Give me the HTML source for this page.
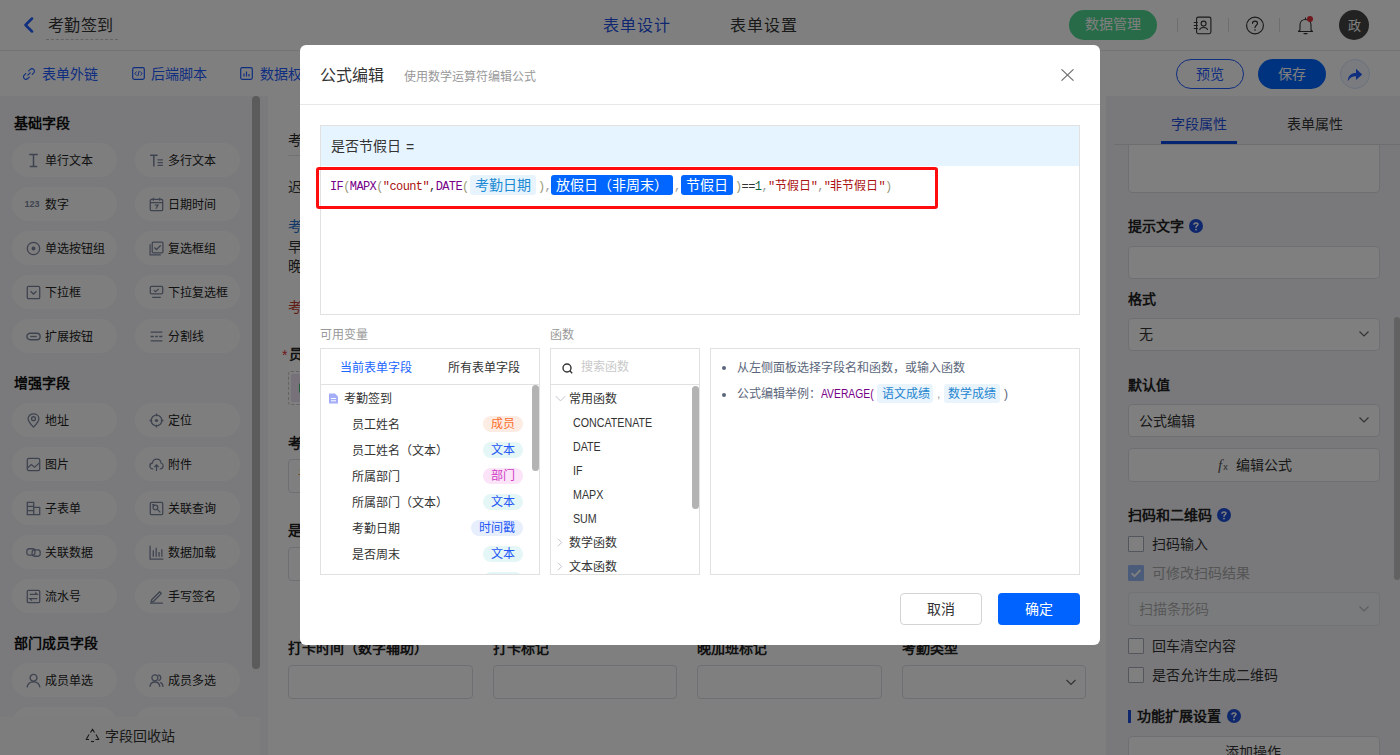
<!DOCTYPE html>
<html lang="zh-CN">
<head>
<meta charset="utf-8">
<style>
*{box-sizing:border-box;margin:0;padding:0}
html,body{width:1400px;height:755px;overflow:hidden;background:#fff}
body{font-family:"Liberation Sans",sans-serif;color:#333;position:relative}
.abs{position:absolute}
.t{position:absolute;white-space:nowrap;line-height:1}
/* header */
#hdr{left:0;top:0;width:1400px;height:51px;background:#fff;border-bottom:1px solid #e8e8e8}
#tb{left:0;top:51px;width:1400px;height:45px;background:#fff}
#side{left:0;top:96px;width:260px;height:659px;background:#f4f5f9}
.pill{position:absolute;width:105px;height:34px;border-radius:17px;background:#fdfdfd}
.pill .ic{position:absolute;left:14px;top:10px;width:15px;height:15px;overflow:visible}
.pill .tx{position:absolute;left:33px;top:1px;line-height:34px;font-size:12px;color:#222;white-space:nowrap}
.sh{position:absolute;left:14px;font-size:14px;font-weight:bold;color:#111;line-height:1}
#canvas{left:260px;top:96px;width:846px;height:659px;background:#f4f5f9}
#form{left:268px;top:96px;width:838px;height:659px;background:#fff}
#rp{left:1106px;top:96px;width:294px;height:659px;background:#f2f3f7}
.inp{position:absolute;background:#fff;border:1px solid #dcdfe6;border-radius:4px}
.lbl{position:absolute;font-size:14px;font-weight:bold;color:#222;line-height:1;white-space:nowrap}
.cb{position:absolute;width:16px;height:16px;border:1px solid #a9adbb;border-radius:1px;background:#fff}
.cbl{position:absolute;font-size:14px;color:#333;line-height:1;white-space:nowrap}
#mask{left:0;top:0;width:1400px;height:755px;background:rgba(0,0,0,.5)}
/* modal */
#modal{left:300px;top:45px;width:800px;height:600px;background:#fff;border-radius:6px}
.tag{position:absolute;height:16px;border-radius:8px;font-size:12px;line-height:16px;text-align:center;white-space:nowrap}
.fn{font-size:12px;color:#333;transform:scaleX(0.89);transform-origin:0 0}
.mono{font-family:"Liberation Mono",monospace}
</style>
</head>
<body>
<!-- header -->
<div id="hdr" class="abs">
  <svg class="abs" style="left:22px;top:17px" width="14" height="16" viewBox="0 0 14 16"><path d="M10 1.5 L3.5 8 L10 14.5" fill="none" stroke="#1e5cff" stroke-width="2.5" stroke-linecap="round" stroke-linejoin="round"/></svg>
  <div class="t" style="left:48px;top:18px;font-size:16px;color:#333;letter-spacing:0.3px">考勤签到</div>
  <div class="abs" style="left:46px;top:39px;width:72px;border-top:1px dashed #c9c9c9"></div>
  <div class="t" style="left:603px;top:18px;font-size:16px;letter-spacing:1px;color:#1d4fe0">表单设计</div>
  <div class="t" style="left:730px;top:18px;font-size:16px;letter-spacing:1px;color:#333">表单设置</div>
  <div class="abs" style="left:1069px;top:10px;width:88px;height:30px;border-radius:15px;background:#4fd690"></div>
  <div class="t" style="left:1085px;top:17px;font-size:14px;color:#fff">数据管理</div>
  <div class="abs" style="left:1177px;top:18px;width:1px;height:14px;background:#ddd"></div>
  <svg class="abs" style="left:1193px;top:16px" width="20" height="19" viewBox="0 0 20 19"><rect x="3.6" y="1.1" width="14.3" height="16.6" rx="1.6" fill="none" stroke="#333" stroke-width="1.1"/><circle cx="10.6" cy="7.6" r="2.5" fill="none" stroke="#333" stroke-width="1.1"/><path d="M6.6 14 C7.2 10.6 14 10.6 14.6 14" fill="none" stroke="#333" stroke-width="1.1"/><path d="M0.8 6.5h4M0.8 9.5h4M0.8 12.5h4" stroke="#333" stroke-width="1"/></svg>
  <div class="abs" style="left:1228px;top:18px;width:1px;height:14px;background:#ddd"></div>
  <svg class="abs" style="left:1245px;top:16px" width="20" height="20" viewBox="0 0 20 20"><circle cx="10" cy="9.5" r="8.4" fill="none" stroke="#333" stroke-width="1.15"/><path d="M7.5 7.3 C7.5 4.4 12.5 4.4 12.5 7.3 C12.5 9.2 10 9.2 10 11.6" fill="none" stroke="#333" stroke-width="1.2" stroke-linecap="round"/><circle cx="10" cy="14" r="0.8" fill="#333"/></svg>
  <div class="abs" style="left:1279px;top:18px;width:1px;height:14px;background:#ddd"></div>
  <svg class="abs" style="left:1296px;top:15px" width="20" height="20" viewBox="0 0 20 20"><path d="M2.5 16.5 L4 15 L4 10 C4 6.7 6.4 4.5 9.5 4.5 C12.6 4.5 15 6.7 15 10 L15 15 L16.5 16.5 Z" fill="none" stroke="#333" stroke-width="1.1" stroke-linejoin="round"/><path d="M8 18.6h3" stroke="#333" stroke-width="1.2" stroke-linecap="round"/><path d="M9.5 2.5v2" stroke="#333" stroke-width="1.1"/><circle cx="14" cy="4" r="3" fill="#e0303a"/></svg>
  <div class="abs" style="left:1339px;top:10px;width:30px;height:30px;border-radius:50%;background:#454545"></div>
  <div class="t" style="left:1348px;top:19px;font-size:13px;color:#fff">政</div>
</div>
<!-- toolbar -->
<div id="tb" class="abs">
  <svg class="abs" style="left:23px;top:17px" width="12" height="12" viewBox="0 0 13 13"><path d="M5.2 7.8 L7.8 5.2" stroke="#1e5cff" stroke-width="1.2" stroke-linecap="round"/><path d="M6.2 3.2 L7.6 1.8 C8.8 0.6 10.6 0.6 11.6 1.6 C12.6 2.6 12.6 4.4 11.4 5.6 L10 7" fill="none" stroke="#1e5cff" stroke-width="1.2" stroke-linecap="round"/><path d="M3 6 L1.6 7.4 C0.4 8.6 0.4 10.4 1.4 11.4 C2.4 12.4 4.2 12.4 5.4 11.2 L6.8 9.8" fill="none" stroke="#1e5cff" stroke-width="1.2" stroke-linecap="round"/></svg>
  <div class="t" style="left:42px;top:16px;font-size:14px;color:#1e5cff">表单外链</div>
  <svg class="abs" style="left:132px;top:16px" width="13" height="13" viewBox="0 0 13 13"><rect x="0.7" y="0.7" width="11.6" height="11.6" rx="1.5" fill="none" stroke="#1e5cff" stroke-width="1.2"/><path d="M4.5 4.5 L3 6.5 L4.5 8.5 M8.5 4.5 L10 6.5 L8.5 8.5 M7.2 3.8 L5.8 9.2" fill="none" stroke="#1e5cff" stroke-width="1"/></svg>
  <div class="t" style="left:151px;top:16px;font-size:14px;color:#1e5cff">后端脚本</div>
  <svg class="abs" style="left:240px;top:16px" width="13" height="13" viewBox="0 0 13 13"><rect x="0.7" y="0.7" width="11.6" height="11.6" rx="1.5" fill="none" stroke="#1e5cff" stroke-width="1.2"/><path d="M4 9.5V6.5M6.5 9.5V4.5M9 9.5V7" stroke="#1e5cff" stroke-width="1.2"/></svg>
  <div class="t" style="left:260px;top:16px;font-size:14px;color:#1e5cff">数据权限</div>
  <div class="abs" style="left:1176px;top:8px;width:68px;height:30px;border-radius:15px;border:1px solid #1e5cff;background:#fff"></div>
  <div class="t" style="left:1196px;top:16px;font-size:14px;color:#1e5cff">预览</div>
  <div class="abs" style="left:1258px;top:8px;width:68px;height:30px;border-radius:15px;background:#0066ff"></div>
  <div class="t" style="left:1278px;top:16px;font-size:14px;color:#fff">保存</div>
  <div class="abs" style="left:1340px;top:8px;width:30px;height:30px;border-radius:50%;border:1px solid #d6e2fb;background:#f2f6fe"></div>
  <svg class="abs" style="left:1347px;top:17px" width="16" height="14" viewBox="0 0 16 14"><path d="M0.8 13.2 C1 7.5 4.5 5 9 5 L9 0.8 L15.2 6.5 L9 12 L9 8.2 C5.5 8.2 2.8 9.5 0.8 13.2 Z" fill="#1e5cff"/></svg>
</div>
<!-- sidebar -->
<div id="side" class="abs">
  <div class="sh" style="top:20px">基础字段</div>
  <div class="sh" style="top:280px">增强字段</div>
  <div class="sh" style="top:540px">部门成员字段</div>
</div>
<div class="abs" style="left:252px;top:96px;width:8px;height:573px;border-radius:4px;background:#b6b6b8"></div>
<div class="pill" style="left:12px;top:143px"><svg class="ic" viewBox="0 0 14 14"><path d="M3 1.5h8M7 1.5v11M3.5 12.5h7" stroke="#7d87a0" stroke-width="1.4" fill="none"/></svg><div class="tx">单行文本</div></div>
<div class="pill" style="left:135px;top:143px"><svg class="ic" viewBox="0 0 14 14"><path d="M1 2h7M4.5 2v10.5" stroke="#7d87a0" stroke-width="1.4" fill="none"/><path d="M8 6.5h5M8 9h5M8 11.5h5" stroke="#7d87a0" stroke-width="1.2"/></svg><div class="tx">多行文本</div></div>
<div class="pill" style="left:12px;top:187px"><svg class="ic" viewBox="0 0 14 14"><text x="-1.5" y="9.4" font-size="9" font-weight="bold" font-family="Liberation Sans" fill="#7d87a0" textLength="14" lengthAdjust="spacingAndGlyphs">123</text></svg><div class="tx">数字</div></div>
<div class="pill" style="left:135px;top:187px"><svg class="ic" viewBox="0 0 14 14"><rect x="1.2" y="2.2" width="11.6" height="10.6" rx="1.2" fill="none" stroke="#7d87a0" stroke-width="1.2"/><path d="M1.2 5.2h11.6M4 0.8v2.6M10 0.8v2.6M5.5 7.5h3L6.5 11" stroke="#7d87a0" stroke-width="1.1" fill="none"/></svg><div class="tx">日期时间</div></div>
<div class="pill" style="left:12px;top:231px"><svg class="ic" viewBox="0 0 14 14"><circle cx="7" cy="7" r="5.8" fill="none" stroke="#7d87a0" stroke-width="1.2"/><circle cx="7" cy="7" r="1.8" fill="#7d87a0"/></svg><div class="tx">单选按钮组</div></div>
<div class="pill" style="left:135px;top:231px"><svg class="ic" viewBox="0 0 14 14"><path d="M1 3V13h10" fill="none" stroke="#7d87a0" stroke-width="1.1"/><rect x="3" y="1" width="10" height="10" rx="1" fill="none" stroke="#7d87a0" stroke-width="1.2"/><path d="M5 6l2 2 4-4" fill="none" stroke="#7d87a0" stroke-width="1.2"/></svg><div class="tx">复选框组</div></div>
<div class="pill" style="left:12px;top:275px"><svg class="ic" viewBox="0 0 14 14"><rect x="1.2" y="1.2" width="11.6" height="11.6" rx="1.2" fill="none" stroke="#7d87a0" stroke-width="1.2"/><path d="M4.2 5.8L7 8.4 9.8 5.8" fill="none" stroke="#7d87a0" stroke-width="1.2"/></svg><div class="tx">下拉框</div></div>
<div class="pill" style="left:135px;top:275px"><svg class="ic" viewBox="0 0 14 14"><rect x="1.2" y="1.2" width="11.6" height="7" rx="1.2" fill="none" stroke="#7d87a0" stroke-width="1.2"/><path d="M3 11.5h8M4.5 4.8l1.5 1.4 3-2.4" fill="none" stroke="#7d87a0" stroke-width="1.2"/></svg><div class="tx">下拉复选框</div></div>
<div class="pill" style="left:12px;top:319px"><svg class="ic" viewBox="0 0 14 14"><rect x="0.8" y="4" width="12.4" height="6" rx="3" fill="none" stroke="#7d87a0" stroke-width="1.3"/><path d="M4 7h6" stroke="#7d87a0" stroke-width="1.2"/></svg><div class="tx">扩展按钮</div></div>
<div class="pill" style="left:135px;top:319px"><svg class="ic" viewBox="0 0 14 14"><path d="M1.5 3h11M1.5 11h11M1.5 7h3M5.8 7h2.4M9.5 7h3" stroke="#7d87a0" stroke-width="1.2"/></svg><div class="tx">分割线</div></div>
<div class="pill" style="left:12px;top:403px"><svg class="ic" viewBox="0 0 14 14"><path d="M7 13.2C3.5 9.5 2 7.5 2 5.3 2 2.6 4.2 0.8 7 0.8s5 1.8 5 4.5c0 2.2-1.5 4.2-5 7.9z" fill="none" stroke="#7d87a0" stroke-width="1.2"/><circle cx="7" cy="5.3" r="1.8" fill="none" stroke="#7d87a0" stroke-width="1.2"/></svg><div class="tx">地址</div></div>
<div class="pill" style="left:135px;top:403px"><svg class="ic" viewBox="0 0 14 14"><circle cx="7" cy="7" r="5" fill="none" stroke="#7d87a0" stroke-width="1.2"/><circle cx="7" cy="7" r="1.5" fill="#7d87a0"/><path d="M7 0.5v2.5M7 11v2.5M0.5 7H3M11 7h2.5" stroke="#7d87a0" stroke-width="1.2"/></svg><div class="tx">定位</div></div>
<div class="pill" style="left:12px;top:447px"><svg class="ic" viewBox="0 0 14 14"><rect x="1.2" y="1.2" width="11.6" height="11.6" rx="1.5" fill="none" stroke="#7d87a0" stroke-width="1.2"/><path d="M1.5 10l3.5-3 3 2.5 4.5-4" fill="none" stroke="#7d87a0" stroke-width="1.1"/></svg><div class="tx">图片</div></div>
<div class="pill" style="left:135px;top:447px"><svg class="ic" viewBox="0 0 14 14"><path d="M4 11H3.5C2 11 0.8 9.8 0.8 8.3 0.8 6.9 1.9 5.8 3.2 5.6 3.6 3.5 5.2 2 7.2 2c2.1 0 3.8 1.6 4 3.6 1.2 0.3 2 1.3 2 2.6C13.2 9.8 12 11 10.5 11H10" fill="none" stroke="#7d87a0" stroke-width="1.2"/><path d="M7 13V7.5M5 9.3L7 7.3 9 9.3" fill="none" stroke="#7d87a0" stroke-width="1.2"/></svg><div class="tx">附件</div></div>
<div class="pill" style="left:12px;top:491px"><svg class="ic" viewBox="0 0 14 14"><path d="M1.2 1.2h6v11.6h-6zM7.2 6h5.6v6.8H7.2M1.2 5h6M1.2 9h6" fill="none" stroke="#7d87a0" stroke-width="1.2"/></svg><div class="tx">子表单</div></div>
<div class="pill" style="left:135px;top:491px"><svg class="ic" viewBox="0 0 14 14"><rect x="1.2" y="1.2" width="11.6" height="11.6" rx="1.2" fill="none" stroke="#7d87a0" stroke-width="1.2"/><circle cx="6" cy="6" r="2.2" fill="none" stroke="#7d87a0" stroke-width="1.2"/><path d="M7.6 7.6l3 3M3 3.5h2" stroke="#7d87a0" stroke-width="1.2"/></svg><div class="tx">关联查询</div></div>
<div class="pill" style="left:12px;top:535px"><svg class="ic" viewBox="0 0 14 14"><rect x="0.8" y="3.5" width="7.5" height="6" rx="2" fill="none" stroke="#7d87a0" stroke-width="1.2"/><rect x="5.7" y="4.5" width="7.5" height="6" rx="2" fill="none" stroke="#7d87a0" stroke-width="1.2"/></svg><div class="tx">关联数据</div></div>
<div class="pill" style="left:135px;top:535px"><svg class="ic" viewBox="0 0 14 14"><path d="M1 0.8v12.4h12.4" fill="none" stroke="#7d87a0" stroke-width="1.2"/><path d="M4 11V5M6.7 11V2.5M9.4 11V6.5M12 11V4" stroke="#7d87a0" stroke-width="1.2"/></svg><div class="tx">数据加载</div></div>
<div class="pill" style="left:12px;top:579px"><svg class="ic" viewBox="0 0 14 14"><rect x="1.2" y="1.2" width="11.6" height="11.6" rx="1.2" fill="none" stroke="#7d87a0" stroke-width="1.2"/><path d="M3.5 5h7l-2-1.8M10.5 9h-7l2 1.8" fill="none" stroke="#7d87a0" stroke-width="1.1"/></svg><div class="tx">流水号</div></div>
<div class="pill" style="left:135px;top:579px"><svg class="ic" viewBox="0 0 14 14"><path d="M2.5 10L10 2.5l1.6 1.6-7.5 7.5-2.2 0.6z" fill="none" stroke="#7d87a0" stroke-width="1.2" stroke-linejoin="round"/><path d="M1 13.2h12" stroke="#7d87a0" stroke-width="1.2"/></svg><div class="tx">手写签名</div></div>
<div class="pill" style="left:12px;top:663px"><svg class="ic" viewBox="0 0 14 14"><circle cx="7" cy="4.5" r="3.2" fill="none" stroke="#7d87a0" stroke-width="1.3"/><path d="M1 13.5c0.5-3.5 3-5.2 6-5.2s5.5 1.7 6 5.2" fill="none" stroke="#7d87a0" stroke-width="1.3"/></svg><div class="tx">成员单选</div></div>
<div class="pill" style="left:135px;top:663px"><svg class="ic" viewBox="0 0 14 14"><circle cx="5.5" cy="4.5" r="2.8" fill="none" stroke="#7d87a0" stroke-width="1.2"/><path d="M0.8 13c0.4-3 2.3-4.6 4.7-4.6s4.3 1.6 4.7 4.6M8.5 1.8c1.5 0.2 2.5 1.3 2.5 2.7s-1 2.4-2.2 2.7M10.5 8.7c1.5 0.6 2.4 2 2.7 4.3" fill="none" stroke="#7d87a0" stroke-width="1.2"/></svg><div class="tx">成员多选</div></div>
<div class="pill" style="left:12px;top:707px"><svg class="ic" viewBox="0 0 14 14"><circle cx="7" cy="4.5" r="3.2" fill="none" stroke="#7d87a0" stroke-width="1.3"/><path d="M1 13.5c0.5-3.5 3-5.2 6-5.2s5.5 1.7 6 5.2" fill="none" stroke="#7d87a0" stroke-width="1.3"/></svg><div class="tx">部门单选</div></div>
<div class="pill" style="left:135px;top:707px"><svg class="ic" viewBox="0 0 14 14"><circle cx="5.5" cy="4.5" r="2.8" fill="none" stroke="#7d87a0" stroke-width="1.2"/><path d="M0.8 13c0.4-3 2.3-4.6 4.7-4.6s4.3 1.6 4.7 4.6M8.5 1.8c1.5 0.2 2.5 1.3 2.5 2.7s-1 2.4-2.2 2.7M10.5 8.7c1.5 0.6 2.4 2 2.7 4.3" fill="none" stroke="#7d87a0" stroke-width="1.2"/></svg><div class="tx">部门多选</div></div>
<div class="abs" style="left:0;top:717px;width:260px;height:38px;background:#fbfbfc"></div>
<svg class="abs" style="left:85px;top:728px" width="15" height="15" viewBox="0 0 15 15"><path d="M5.5 4.5 L7.5 1.2 L9.5 4.5 M11 6.5 L13.8 11.5 L10.5 11.5 M4 11.5 L1.2 11.5 L4 6.5" fill="none" stroke="#333" stroke-width="1.1" stroke-linejoin="round"/><path d="M6 13.5 L9 13.5" stroke="#333" stroke-width="1.1"/></svg>
<div class="t" style="left:105px;top:729px;font-size:14px;color:#333">字段回收站</div>
<!-- canvas -->
<div id="canvas" class="abs"></div>
<div id="form" class="abs"></div>
<div class="t" style="left:288px;top:133px;font-size:14px;color:#222">考勤签到</div>
<div class="abs" style="left:288px;top:155px;width:790px;border-top:1px solid #e4e4e4"></div>
<div class="t" style="left:288px;top:180px;font-size:14px;color:#333">迟到早退规则说明</div>
<div class="t" style="left:288px;top:219px;font-size:14px;color:#1f6fd0">考勤时间</div>
<div class="t" style="left:288px;top:240px;font-size:14px;color:#333">早上</div>
<div class="t" style="left:288px;top:259px;font-size:14px;color:#333">晚上</div>
<div class="t" style="left:288px;top:300px;font-size:14px;color:#c0392b">考勤提醒</div>
<div class="t" style="left:282px;top:348px;font-size:14px;color:#e0303a">*</div>
<div class="t" style="left:289px;top:347px;font-size:14px;color:#222;font-weight:bold">员工姓名</div>
<div class="abs" style="left:288px;top:371px;width:200px;height:34px;border:1px dashed #c8c8c8;border-radius:3px"></div>
<div class="abs" style="left:291px;top:374px;width:100px;height:28px;background:#eee2f4;border-radius:2px"></div>
<div class="abs" style="left:299px;top:383px;width:3px;height:10px;background:#3fbf6f;border-radius:2px"></div>
<div class="t" style="left:288px;top:436px;font-size:14px;color:#222;font-weight:bold">考勤日期</div>
<div class="inp" style="left:288px;top:459px;width:380px;height:34px"></div>
<div class="t" style="left:298px;top:469px;font-size:14px;color:#e88a2a">请选择</div>
<div class="t" style="left:288px;top:523px;font-size:14px;color:#222;font-weight:bold">是否周末</div>
<div class="inp" style="left:288px;top:547px;width:380px;height:34px"></div>
<div class="t" style="left:288px;top:641px;font-size:14px;color:#222;font-weight:bold">打卡时间（数字辅助）</div>
<div class="t" style="left:493px;top:641px;font-size:14px;color:#222;font-weight:bold">打卡标记</div>
<div class="t" style="left:697px;top:641px;font-size:14px;color:#222;font-weight:bold">晚加班标记</div>
<div class="t" style="left:902px;top:641px;font-size:14px;color:#222;font-weight:bold">考勤类型</div>
<div class="inp" style="left:288px;top:665px;width:185px;height:34px"></div>
<div class="inp" style="left:493px;top:665px;width:184px;height:34px"></div>
<div class="inp" style="left:697px;top:665px;width:185px;height:34px"></div>
<div class="inp" style="left:902px;top:665px;width:184px;height:34px"></div>
<svg class="abs" style="left:1065px;top:677px" width="12" height="10" viewBox="0 0 12 10"><path d="M1.5 3l4.5 4.5L10.5 3" fill="none" stroke="#666" stroke-width="1.2"/></svg>
<!-- right panel -->
<div id="rp" class="abs"></div>
<div class="inp" style="left:1128px;top:110px;width:252px;height:83px"></div>
<div class="abs" style="left:1106px;top:96px;width:294px;height:48px;background:#f2f3f7"></div>
<div class="abs" style="left:1114px;top:144px;width:286px;border-top:1px solid #dcdde2"></div>
<div class="t" style="left:1171px;top:117px;font-size:14px;color:#1d4fe0">字段属性</div>
<div class="t" style="left:1287px;top:117px;font-size:14px;color:#333">表单属性</div>
<div class="abs" style="left:1161px;top:141px;width:76px;height:3px;background:#0a4be0"></div>
<div class="lbl" style="left:1128px;top:219px">提示文字</div>
<svg class="abs qi" style="left:1189px;top:219px" width="14" height="14" viewBox="0 0 14 14"><circle cx="7" cy="7" r="7" fill="#1e4fd8"/><path d="M5 5.3C5 3.4 9 3.4 9 5.3 9 6.7 7 6.6 7 8.2" fill="none" stroke="#fff" stroke-width="1.5" stroke-linecap="round"/><circle cx="7" cy="10.6" r="0.95" fill="#fff"/></svg>
<div class="inp" style="left:1128px;top:246px;width:252px;height:33px"></div>
<div class="lbl" style="left:1128px;top:292px">格式</div>
<div class="inp" style="left:1128px;top:318px;width:252px;height:33px"></div>
<div class="t" style="left:1139px;top:327px;font-size:14px;color:#333">无</div>
<svg class="abs" style="left:1358px;top:330px" width="12" height="8" viewBox="0 0 12 8"><path d="M1.5 1.5l4.5 4.5 4.5-4.5" fill="none" stroke="#666" stroke-width="1.2"/></svg>
<div class="lbl" style="left:1128px;top:378px">默认值</div>
<div class="inp" style="left:1128px;top:404px;width:252px;height:33px"></div>
<div class="t" style="left:1139px;top:414px;font-size:14px;color:#333">公式编辑</div>
<svg class="abs" style="left:1358px;top:416px" width="12" height="8" viewBox="0 0 12 8"><path d="M1.5 1.5l4.5 4.5 4.5-4.5" fill="none" stroke="#666" stroke-width="1.2"/></svg>
<div class="inp" style="left:1128px;top:448px;width:252px;height:34px"></div>
<div class="t" style="left:1218px;top:458px;font-size:15px;color:#555;font-family:'Liberation Serif',serif;font-style:italic">f<span style="font-size:9px;font-style:normal;font-family:'Liberation Sans',sans-serif;margin-left:1px">x</span></div>
<div class="t" style="left:1236px;top:458px;font-size:14px;color:#333">编辑公式</div>
<div class="lbl" style="left:1128px;top:508px">扫码和二维码</div>
<svg class="abs qi" style="left:1217px;top:508px" width="14" height="14" viewBox="0 0 14 14"><circle cx="7" cy="7" r="7" fill="#1e4fd8"/><path d="M5 5.3C5 3.4 9 3.4 9 5.3 9 6.7 7 6.6 7 8.2" fill="none" stroke="#fff" stroke-width="1.5" stroke-linecap="round"/><circle cx="7" cy="10.6" r="0.95" fill="#fff"/></svg>
<div class="cb" style="left:1128px;top:536px"></div>
<div class="cbl" style="left:1152px;top:537px">扫码输入</div>
<div class="cb" style="left:1128px;top:565px;background:#94b8f4;border-color:#94b8f4"></div>
<svg class="abs" style="left:1129px;top:566px" width="14" height="14" viewBox="0 0 14 14"><path d="M2.5 7.2l3 3L11.5 4" fill="none" stroke="#fff" stroke-width="1.8"/></svg>
<div class="cbl" style="left:1152px;top:566px;color:#aaa">可修改扫码结果</div>
<div class="inp" style="left:1128px;top:592px;width:252px;height:34px;background:#f5f7fa;border-color:#e4e7ed"></div>
<div class="t" style="left:1139px;top:602px;font-size:14px;color:#b0b0b0">扫描条形码</div>
<svg class="abs" style="left:1358px;top:605px" width="12" height="8" viewBox="0 0 12 8"><path d="M1.5 1.5l4.5 4.5 4.5-4.5" fill="none" stroke="#bbb" stroke-width="1.2"/></svg>
<div class="cb" style="left:1128px;top:638px"></div>
<div class="cbl" style="left:1152px;top:639px">回车清空内容</div>
<div class="cb" style="left:1128px;top:667px"></div>
<div class="cbl" style="left:1152px;top:668px">是否允许生成二维码</div>
<div class="abs" style="left:1128px;top:710px;width:3px;height:13px;background:#1e4fd8"></div>
<div class="lbl" style="left:1137px;top:709px">功能扩展设置</div>
<svg class="abs qi" style="left:1227px;top:709px" width="14" height="14" viewBox="0 0 14 14"><circle cx="7" cy="7" r="7" fill="#1e4fd8"/><path d="M5 5.3C5 3.4 9 3.4 9 5.3 9 6.7 7 6.6 7 8.2" fill="none" stroke="#fff" stroke-width="1.5" stroke-linecap="round"/><circle cx="7" cy="10.6" r="0.95" fill="#fff"/></svg>
<div class="inp" style="left:1128px;top:736px;width:252px;height:33px"></div>
<div class="t" style="left:1225px;top:745px;font-size:14px;color:#333">添加操作</div>
<div class="abs" style="left:1394px;top:317px;width:6px;height:263px;border-radius:3px;background:#c4c4c6"></div>
<div id="mask" class="abs"></div>
<div id="modal" class="abs"></div>
<div class="t" style="left:320px;top:68px;font-size:16px;color:#333">公式编辑</div>
<div class="t" style="left:404px;top:71px;font-size:12px;color:#999">使用数学运算符编辑公式</div>
<svg class="abs" style="left:1061px;top:69px" width="13" height="12" viewBox="0 0 13 12"><path d="M0.5 0.3L12.5 11.7M12.5 0.3L0.5 11.7" stroke="#707070" stroke-width="1.1"/></svg>
<div class="abs" style="left:300px;top:104px;width:800px;border-top:1px solid #e8e8e8"></div>
<!-- formula box -->
<div class="abs" style="left:320px;top:125px;width:760px;height:190px;border:1px solid #e1e1e1;background:#fff"></div>
<div class="abs" style="left:321px;top:126px;width:758px;height:40px;background:#e6f4ff"></div>
<div class="t" style="left:331px;top:139px;font-size:14px;color:#333">是否节假日 <span style="position:relative;left:1px;top:1px">=</span></div>
<div class="abs" style="left:316px;top:167px;width:622px;height:42px;border:3px solid #ff0d0d;border-radius:3px"></div>
<div class="t mono" id="fl" style="left:330px;top:181px;font-size:12px;letter-spacing:-0.6px">
<span style="color:#770088">IF</span><span style="color:#999977">(</span><span style="color:#770088">MAPX</span><span style="color:#999977">(</span><span style="color:#aa1111">"count"</span><span style="color:#333">,</span><span style="color:#770088">DATE</span><span style="color:#999977">(</span>
</div>
<div class="abs" style="left:470px;top:175px;width:66px;height:20px;border-radius:3px;background:#e8f4fd"></div>
<div class="t" style="left:475px;top:178px;font-size:14px;color:#1b8ad3">考勤日期</div>
<div class="t mono" style="left:538px;top:181px;font-size:12px;letter-spacing:-0.6px"><span style="color:#999977">)</span><span style="color:#999">,</span></div>
<div class="abs" style="left:551px;top:175px;width:122px;height:20px;border-radius:3px;background:#0066ff"></div>
<div class="t" style="left:556px;top:178px;font-size:14px;color:#fff">放假日（非周末）</div>
<div class="t mono" style="left:674px;top:181px;font-size:12px;color:#999">,</div>
<div class="abs" style="left:681px;top:175px;width:52px;height:20px;border-radius:3px;background:#0066ff"></div>
<div class="t" style="left:686px;top:178px;font-size:14px;color:#fff">节假日</div>
<div class="t mono" style="left:735px;top:181px;font-size:12px;letter-spacing:-0.6px"><span style="color:#999977">)</span><span style="color:#333">==</span><span style="color:#116644">1</span><span style="color:#999">,</span><span style="color:#aa1111">"<span style="letter-spacing:0">节假日</span>"</span><span style="color:#999">,</span><span style="color:#aa1111">"<span style="letter-spacing:0">非节假日</span>"</span><span style="color:#999977">)</span></div>
<!-- labels -->
<div class="t" style="left:320px;top:329px;font-size:12px;color:#999">可用变量</div>
<div class="t" style="left:550px;top:329px;font-size:12px;color:#999">函数</div>
<!-- variables panel -->
<div class="abs" style="left:320px;top:348px;width:220px;height:227px;border:1px solid #e1e1e1;overflow:hidden">
  <div class="t" style="left:19px;top:13px;font-size:12px;color:#1a66ff">当前表单字段</div>
  <div class="t" style="left:127px;top:13px;font-size:12px;color:#333">所有表单字段</div>
  <div class="abs" style="left:0;top:35px;width:220px;border-top:1px solid #e1e1e1"></div>
  <svg class="abs" style="left:7px;top:44px" width="11" height="11" viewBox="0 0 11 11"><path d="M1 0.5h6l3 3V10.5H1z" fill="#a4adf7"/><path d="M3 5.5h5M3 7.8h5" stroke="#fff" stroke-width="1"/></svg>
  <div class="t" style="left:23px;top:44px;font-size:12px;color:#333">考勤签到</div>
  <div class="t" style="left:31px;top:70px;font-size:12px;color:#333">员工姓名</div>
  <div class="t" style="left:31px;top:96px;font-size:12px;color:#333">员工姓名（文本）</div>
  <div class="t" style="left:31px;top:122px;font-size:12px;color:#333">所属部门</div>
  <div class="t" style="left:31px;top:148px;font-size:12px;color:#333">所属部门（文本）</div>
  <div class="t" style="left:31px;top:174px;font-size:12px;color:#333">考勤日期</div>
  <div class="t" style="left:31px;top:200px;font-size:12px;color:#333">是否周末</div>
  <div class="abs tag" style="left:162px;top:67px;width:40px;background:#fdece3;color:#fa6e2c">成员</div>
  <div class="abs tag" style="left:162px;top:93px;width:40px;background:#e5f6f6;color:#2456f5">文本</div>
  <div class="abs tag" style="left:162px;top:119px;width:40px;background:#fbe3f8;color:#d03cc6">部门</div>
  <div class="abs tag" style="left:162px;top:145px;width:40px;background:#e5f6f6;color:#2456f5">文本</div>
  <div class="abs tag" style="left:150px;top:171px;width:52px;background:#e7effd;color:#2456f5">时间戳</div>
  <div class="abs tag" style="left:162px;top:197px;width:40px;background:#e5f6f6;color:#2456f5">文本</div>
  <div class="abs tag" style="left:162px;top:223px;width:40px;background:#e5f6f6;color:transparent">文本</div>
  <div class="abs" style="left:211px;top:36px;width:7px;height:86px;border-radius:4px;background:#b3b3b3"></div>
</div>
<!-- functions panel -->
<div class="abs" style="left:550px;top:348px;width:150px;height:227px;border:1px solid #e1e1e1;overflow:hidden">
  <svg class="abs" style="left:11px;top:14px" width="11" height="11" viewBox="0 0 11 11"><circle cx="5" cy="5" r="4" fill="none" stroke="#333" stroke-width="1.4"/><path d="M7.8 7.8l2.4 2.4" stroke="#333" stroke-width="1.4"/></svg>
  <div class="t" style="left:30px;top:12px;font-size:12px;color:#c9c9c9">搜索函数</div>
  <div class="abs" style="left:0;top:35px;width:150px;border-top:1px solid #e1e1e1"></div>
  <svg class="abs" style="left:4px;top:46px" width="11" height="8" viewBox="0 0 11 8"><path d="M0.8 1.2l4.7 4.7 4.7-4.7" fill="none" stroke="#c0c4cc" stroke-width="1"/></svg>
  <div class="t" style="left:18px;top:44px;font-size:12px;color:#333">常用函数</div>
  <div class="t fn" style="left:22px;top:68px">CONCATENATE</div>
  <div class="t fn" style="left:22px;top:92px">DATE</div>
  <div class="t fn" style="left:22px;top:116px">IF</div>
  <div class="t fn" style="left:22px;top:140px">MAPX</div>
  <div class="t fn" style="left:22px;top:164px">SUM</div>
  <svg class="abs" style="left:6px;top:189px" width="6" height="9" viewBox="0 0 6 9"><path d="M1 0.8l3.7 3.7L1 8.2" fill="none" stroke="#c0c4cc" stroke-width="1"/></svg>
  <div class="t" style="left:18px;top:188px;font-size:12px;color:#333">数学函数</div>
  <svg class="abs" style="left:6px;top:213px" width="6" height="9" viewBox="0 0 6 9"><path d="M1 0.8l3.7 3.7L1 8.2" fill="none" stroke="#c0c4cc" stroke-width="1"/></svg>
  <div class="t" style="left:18px;top:212px;font-size:12px;color:#333">文本函数</div>
  <div class="abs" style="left:141px;top:37px;width:7px;height:123px;border-radius:4px;background:#b3b3b3"></div>
</div>
<!-- description panel -->
<div class="abs" style="left:710px;top:348px;width:370px;height:227px;border:1px solid #e1e1e1">
  <div class="abs" style="left:11px;top:17px;width:4px;height:4px;border-radius:50%;background:#5a667a"></div>
  <div class="t" style="left:26px;top:13px;font-size:12px;color:#5a667a">从左侧面板选择字段名和函数，或输入函数</div>
  <div class="abs" style="left:11px;top:44px;width:4px;height:4px;border-radius:50%;background:#5a667a"></div>
  <div class="t" style="left:26px;top:39px;font-size:12px;color:#5a667a">公式编辑举例：<span style="color:#770088;display:inline-block;transform:scaleX(0.86);transform-origin:0 0">AVERAGE(</span></div>
  <div class="abs" style="left:166px;top:35px;width:56px;height:19px;border-radius:3px;background:#eaf4fd"></div>
  <div class="t" style="left:171px;top:39px;font-size:12px;color:#1f86cf">语文成绩</div>
  <div class="t" style="left:226px;top:39px;font-size:12px;color:#999">,</div>
  <div class="abs" style="left:233px;top:35px;width:56px;height:19px;border-radius:3px;background:#eaf4fd"></div>
  <div class="t" style="left:237px;top:39px;font-size:12px;color:#1f86cf">数学成绩</div>
  <div class="t" style="left:293px;top:39px;font-size:12px;color:#5a667a">)</div>
</div>
<!-- buttons -->
<div class="abs" style="left:900px;top:593px;width:82px;height:32px;border:1px solid #d4d4d4;border-radius:4px;background:#fff"></div>
<div class="t" style="left:927px;top:602px;font-size:14px;color:#333">取消</div>
<div class="abs" style="left:998px;top:593px;width:82px;height:32px;border-radius:4px;background:#0062ff"></div>
<div class="t" style="left:1025px;top:602px;font-size:14px;color:#fff">确定</div>
</body>
</html>
